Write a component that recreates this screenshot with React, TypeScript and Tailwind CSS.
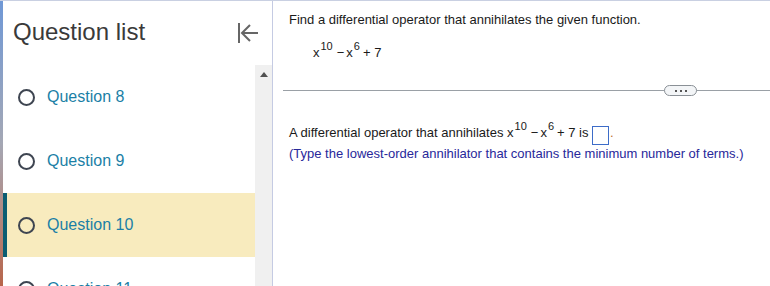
import React from "react";

const questions = [
  { label: "Question 8", active: false },
  { label: "Question 9", active: false },
  { label: "Question 10", active: true },
  { label: "Question 11", active: false },
];

function Expr() {
  return (
    <span className="whitespace-nowrap">
      x<sup className="!-top-[7px] text-[11px] ml-[1px] mr-[4px]">10</sup>
      <span className="mr-[2px]">−</span>x
      <sup className="!-top-[7px] text-[11px] ml-[1px] mr-[3px]">6</sup>+ 7
    </span>
  );
}

export default function App() {
  return (
    <div
      className="w-[770px] h-[286px] flex overflow-hidden bg-white border-t border-[#c9d0e2]"
      style={{ fontFamily: '"Liberation Sans", Arial, sans-serif' }}
    >
      {/* desktop edge */}
      <div className="w-[3px] shrink-0 bg-gradient-to-b from-[#6f98d6] via-[#a4a7b4] to-[#b7654a]"></div>

      {/* Sidebar */}
      <aside className="w-[269px] shrink-0 flex flex-col">
        <div className="h-[64px] shrink-0 flex items-center justify-between pl-[10px] pr-[13px]">
          <h2 className="text-[24px] text-[#3a3a3a] mt-[-2px]">Question list</h2>
          <svg width="22" height="22" viewBox="0 0 22 22" fill="none" stroke="#666" strokeWidth="2">
            <path d="M2 1v20" />
            <path d="M21 11H6" />
            <path d="M13 3l-8 8 8 8" />
          </svg>
        </div>
        <div className="flex-1 flex min-h-0">
          <ul className="flex-1">
            {questions.map((q) => (
              <li
                key={q.label}
                className={
                  q.active
                    ? "h-[64px] flex items-center gap-[12px] pl-[15px] bg-[#f8ebbe] border-l-4 border-[#0b5d72]"
                    : "h-[64px] flex items-center gap-[12px] pl-[15px] border-l-4 border-transparent"
                }
              >
                <span className="w-[17px] h-[17px] rounded-full border-2 border-[#3e4551] -ml-[4px]"></span>
                <span className="text-[16px] text-[#1b7fa6]">{q.label}</span>
              </li>
            ))}
          </ul>
          <div className="w-[17px] shrink-0 bg-[#f0f0f0] flex justify-center pt-[7px]">
            <svg width="8" height="5" viewBox="0 0 8 5">
              <path d="M0 5L4 0l4 5z" fill="#505050" />
            </svg>
          </div>
        </div>
      </aside>

      <div className="w-[1px] shrink-0 bg-[#c5cbe3]"></div>

      {/* Main */}
      <main className="flex-1 text-[13px] text-[#1a1a1a]">
        <div className="pl-[16px] pt-[9px]">
          <p>Find a differential operator that annihilates the given function.</p>
          <p className="pl-[24px] mt-[13px]">
            <Expr />
          </p>
        </div>
        <div className="relative mt-[28px] ml-[10px] h-[1px] bg-[#9aa0a6]">
          <span className="absolute left-[381px] -top-[5px] w-[33px] h-[11px] rounded-full border border-[#8a9096] bg-[#f3f5f7] flex items-center justify-center gap-[3px]">
            <span className="w-[2px] h-[2px] bg-[#555]"></span>
            <span className="w-[2px] h-[2px] bg-[#555]"></span>
            <span className="w-[2px] h-[2px] bg-[#555]"></span>
          </span>
        </div>
        <div className="pl-[16px] pt-[32px]">
          <p className="flex items-end">
            <span>A differential operator that annihilates&nbsp;</span>
            <Expr />
            <span>&nbsp;is&nbsp;</span>
            <span className="inline-block w-[17px] h-[19px] border border-[#3d6cc8] mb-[-2px]"></span>
            <span className="text-[#c0702a] ml-[1px]">.</span>
          </p>
          <p className="text-[#28289a] mt-[1px]">
            (Type the lowest-order annihilator that contains the minimum number of terms.)
          </p>
        </div>
      </main>
    </div>
  );
}
